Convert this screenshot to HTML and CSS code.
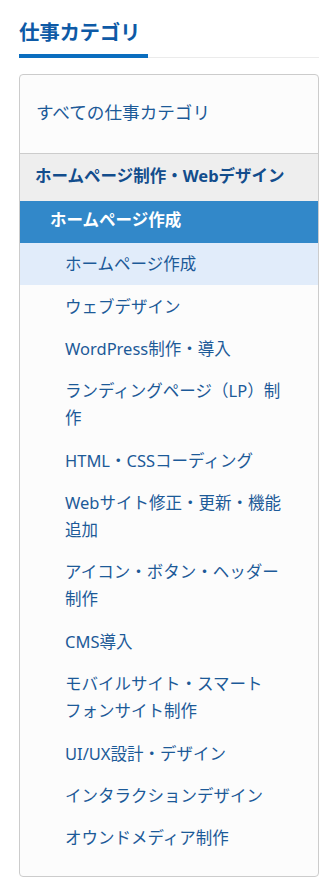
FILE: index.html
```html
<!DOCTYPE html>
<html lang="ja">
<head>
<meta charset="utf-8">
<title>仕事カテゴリ</title>
<link rel="stylesheet" href="styles.css">
</head>
<body>
<div class="sidebar">
  <h2 class="title"><span>仕事カテゴリ</span></h2>
  <div class="box">
    <a class="all" href="#">すべての仕事カテゴリ</a>
    <div class="group">ホームページ制作・Webデザイン</div>
    <div class="sub">ホームページ作成</div>
    <ul class="items">
      <li class="current">ホームページ作成</li>
      <li>ウェブデザイン</li>
      <li>WordPress制作・導入</li>
      <li>ランディングページ（LP）制作</li>
      <li>HTML・CSSコーディング</li>
      <li>Webサイト修正・更新・機能追加</li>
      <li>アイコン・ボタン・ヘッダー制作</li>
      <li>CMS導入</li>
      <li>モバイルサイト・スマートフォンサイト制作</li>
      <li>UI/UX設計・デザイン</li>
      <li>インタラクションデザイン</li>
      <li>オウンドメディア制作</li>
    </ul>
  </div>
</div>
</body>
</html>
```
FILE: styles.css
```css
html, body {
  margin: 0;
  padding: 0;
  background: #ffffff;
}
body {
  font-family: "Noto Sans", "Noto Sans CJK JP", sans-serif;
  color: #1c5a98;
  line-break: strict;
}
.sidebar {
  padding: 17px 8px 0 19px;
}
.title {
  margin: 0;
  font-size: 20.5px;
  line-height: 30px;
  font-weight: 700;
  color: #0e5aa6;
  border-bottom: 1px solid #ebebeb;
}
.title span {
  display: inline-block;
  width: 129px;
  padding-bottom: 7px;
  border-bottom: 4px solid #0b6ebf;
  margin-bottom: -1px;
  letter-spacing: -0.3px;
}
.box {
  margin-top: 16px;
  border: 1px solid #cccccc;
  border-radius: 4px;
  background: #fcfcfc;
  padding-bottom: 17px;
  overflow: hidden;
}
.all {
  display: block;
  padding: 24px 16px 27px 16px;
  font-size: 17.6px;
  line-height: 27px;
  color: #1c5a98;
  text-decoration: none;
  border-bottom: 1px solid #cccccc;
}
.group {
  background: #eeeeee;
  padding: 8px 16px 11.5px 15px;
  font-size: 16.5px;
  line-height: 27px;
  font-weight: 700;
  color: #134d8c;
}
.sub {
  background: #3288c9;
  color: #ffffff;
  padding: 5px 16px 10px 30px;
  font-size: 16.5px;
  line-height: 27px;
  font-weight: 700;
}
.items {
  list-style: none;
  margin: 0;
  padding: 0;
}
.items li {
  padding: 7.7px 34px 7.7px 45px;
  font-size: 16.5px;
  line-height: 27px;
  color: #1c5a98;
}
.items li.current {
  background: #e1ecfa;
}
```
